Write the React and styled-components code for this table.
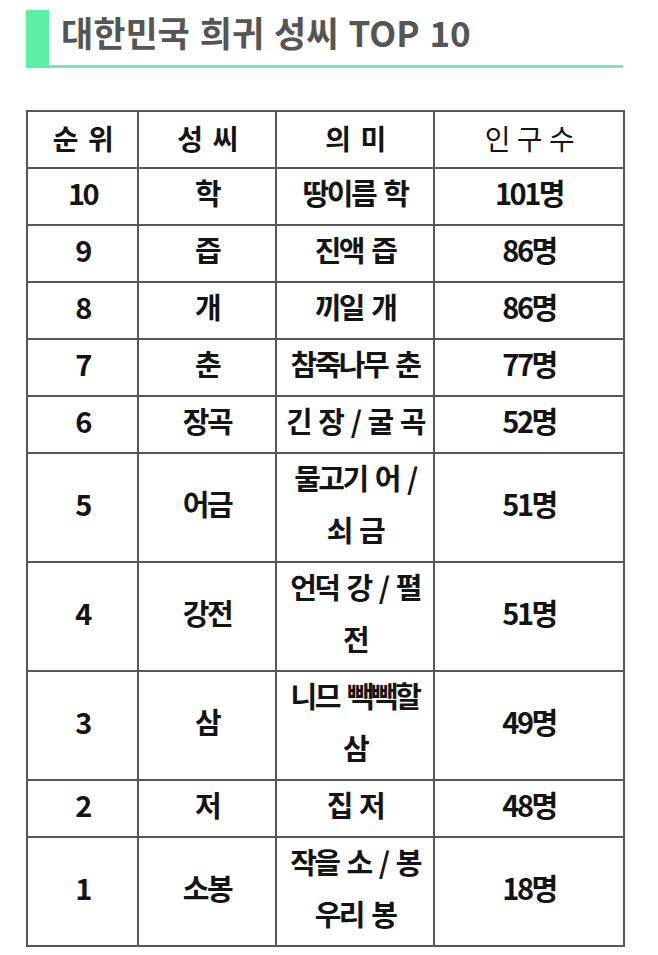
import React from "react";
import styled, { createGlobalStyle } from "styled-components";

const GlobalStyle = createGlobalStyle`
  html, body {
    margin: 0;
    padding: 0;
    background: #ffffff;
  }
  body {
    font-family: "Noto Sans CJK KR", "Noto Sans", sans-serif;
  }
`;

const Page = styled.div`
  width: 658px;
  min-height: 955px;
  padding: 10px 0 0 26px;
  box-sizing: border-box;
`;

const TitleBlock = styled.header`
  display: flex;
  width: 597px;
  height: 58px;
`;

const TitleMark = styled.div`
  width: 23px;
  flex: none;
  background: #5cf0a4;
`;

const TitleArea = styled.div`
  flex: 1;
  border-bottom: 3px solid #82e2bb;
  padding: 2px 0 0 12px;
  box-sizing: border-box;
`;

const Title = styled.h1`
  margin: 0;
  font-family: "Noto Sans CJK KR", sans-serif;
  font-weight: 700;
  font-size: 35px;
  line-height: 40px;
  color: #555555;
  letter-spacing: 0px;
  word-spacing: 2px;
`;

const Table = styled.table`
  margin-top: 42px;
  width: 597px;
  border-collapse: collapse;
  table-layout: fixed;
  font-family: "Noto Sans CJK KR", sans-serif;
  color: #141414;
`;

const Col = styled.col`
  width: ${(p) => p.$w}px;
`;

const HeadCell = styled.th`
  border: 2px solid #585858;
  padding: 0 4px 3px;
  font-size: 28px;
  line-height: 52px;
  font-weight: ${(p) => (p.$light ? 400 : 700)};
  text-align: center;
  letter-spacing: -1.5px;
  word-spacing: ${(p) => (p.$light ? "3px" : "6px")};
`;

const Cell = styled.td`
  border: 2px solid #585858;
  padding: 0 4px 3px;
  font-size: 29px;
  line-height: 52px;
  font-weight: 700;
  text-align: center;
  letter-spacing: -2.5px;
  word-spacing: 4px;
`;

const Line = styled.span`
  display: block;
  white-space: nowrap;
  margin: -3px 0 3px;
`;

const rows = [
  { rank: "10", name: "학", meaning: ["땅이름 학"], pop: "101명" },
  { rank: "9", name: "즙", meaning: ["진액 즙"], pop: "86명" },
  { rank: "8", name: "개", meaning: ["끼일 개"], pop: "86명" },
  { rank: "7", name: "춘", meaning: ["참죽나무 춘"], pop: "77명" },
  { rank: "6", name: "장곡", meaning: ["긴 장 / 굴 곡"], pop: "52명" },
  { rank: "5", name: "어금", meaning: ["물고기 어 /", "쇠 금"], pop: "51명" },
  { rank: "4", name: "강전", meaning: ["언덕 강 / 펼", "전"], pop: "51명" },
  { rank: "3", name: "삼", meaning: ["니므 빽빽할", "삼"], pop: "49명" },
  { rank: "2", name: "저", meaning: ["집 저"], pop: "48명" },
  { rank: "1", name: "소봉", meaning: ["작을 소 / 봉", "우리 봉"], pop: "18명" },
];

export default function App() {
  return (
    <>
      <GlobalStyle />
      <Page>
        <TitleBlock>
          <TitleMark />
          <TitleArea>
            <Title>대한민국 희귀 성씨 TOP 10</Title>
          </TitleArea>
        </TitleBlock>
        <Table>
          <colgroup>
            <Col $w={111} />
            <Col $w={138} />
            <Col $w={158} />
            <Col $w={190} />
          </colgroup>
          <thead>
            <tr>
              <HeadCell>순 위</HeadCell>
              <HeadCell>성 씨</HeadCell>
              <HeadCell>의 미</HeadCell>
              <HeadCell $light>인 구 수</HeadCell>
            </tr>
          </thead>
          <tbody>
            {rows.map((r) => (
              <tr key={r.rank}>
                <Cell><Line>{r.rank}</Line></Cell>
                <Cell><Line>{r.name}</Line></Cell>
                <Cell>
                  {r.meaning.map((m) => (
                    <Line key={m}>{m}</Line>
                  ))}
                </Cell>
                <Cell><Line>{r.pop}</Line></Cell>
              </tr>
            ))}
          </tbody>
        </Table>
      </Page>
    </>
  );
}
